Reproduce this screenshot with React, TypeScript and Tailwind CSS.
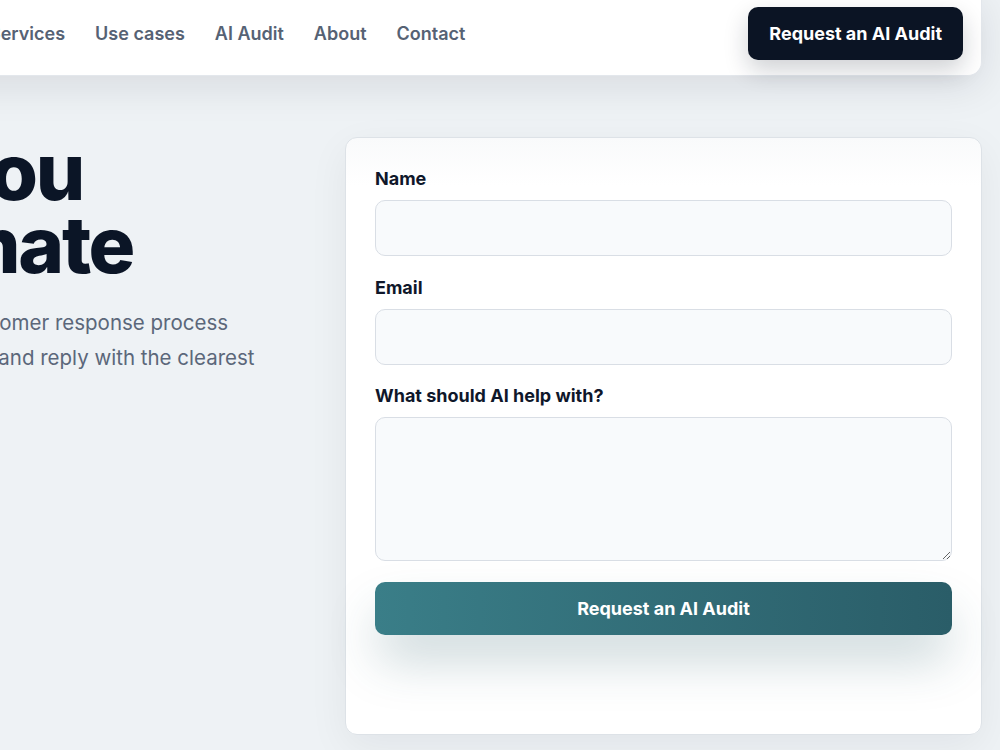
import React from "react";

const font = { fontFamily: "Inter, 'Noto Sans', sans-serif" };

function Field({ label, children }: { label: string; children: React.ReactNode }) {
  return (
    <label className="flex flex-col gap-2">
      <span className="text-[18px] leading-[27px] font-bold text-[#0f172a]">{label}</span>
      {children}
    </label>
  );
}

export default function App() {
  return (
    <div
      style={font}
      className="relative w-[1000px] h-[750px] overflow-hidden bg-[#eef2f5]"
    >
      <div className="ml-[-520px] w-[1502px]">
        {/* Header */}
        <header className="relative z-10 -mt-[8px] h-[84px] flex items-center pl-[20px] pr-[18px] bg-white rounded-br-[14px] border-b border-r border-[#e3e7ec] shadow-[0_10px_40px_rgba(15,23,42,0.10)]">
          <div className="flex items-center gap-3 w-[489px]">
            <div className="w-9 h-9 rounded-[10px] bg-[#0b1424]" />
            <span className="text-[20px] font-extrabold text-[#0b1526]">Northlane AI</span>
          </div>
          <nav className="flex items-center gap-[30px] text-[18px] font-semibold text-[#566274]">
            <a>Services</a>
            <a>Use cases</a>
            <a>AI Audit</a>
            <a>About</a>
            <a>Contact</a>
          </nav>
          <button className="ml-auto h-[53px] px-[21px] rounded-[10px] bg-[#0b1424] text-white text-[18px] font-bold shadow-[0_10px_24px_rgba(15,23,42,0.20)]">
            Request an AI Audit
          </button>
        </header>

        {/* Main */}
        <main className="flex items-start pt-[59px]">
          <section className="flex-1 pl-[20px]">
            <h1 className="whitespace-nowrap text-[78px] leading-[73px] font-extrabold tracking-[-0.03em] text-[#0b1526]">
              Tell us what you
              <br />
              want to automate
            </h1>
            <p className="mt-[24px] whitespace-nowrap text-[20.5px] leading-[35px] text-[#5b677a]">
              In one meeting, we'll look at every step of your customer response process
              <br />
              then show exactly where AI can read, triage, route, and reply with the clearest
              <br />
              answer, every time.
            </p>
          </section>

          <div className="mt-[2px] w-[637px] shrink-0 rounded-[12px] border border-[#dde2e7] bg-gradient-to-b from-[#f9fafb] to-white to-[8%] px-[29px] pt-[27px] pb-[99px] shadow-[0_12px_40px_rgba(15,23,42,0.06)]">
            <form className="flex flex-col">
              <Field label="Name">
                <input className="h-[56px] w-full rounded-[10px] border border-[#d9dee5] bg-[#f8fafc] px-4 outline-none" />
              </Field>
              <div className="h-[18px]" />
              <Field label="Email">
                <input className="h-[56px] w-full rounded-[10px] border border-[#d9dee5] bg-[#f8fafc] px-4 outline-none" />
              </Field>
              <div className="h-[17px]" />
              <Field label="What should AI help with?">
                <textarea className="h-[144px] w-full rounded-[10px] border border-[#d9dee5] bg-[#f8fafc] px-4 py-3 outline-none" />
              </Field>
              <button
                type="button"
                className="mt-[21px] h-[53px] w-full rounded-[10px] bg-gradient-to-r from-[#3a7e88] to-[#2a5d68] text-white text-[18px] font-bold shadow-[0_28px_50px_-4px_rgba(42,93,104,0.26)]"
              >
                Request an AI Audit
              </button>
            </form>
          </div>
        </main>
      </div>
    </div>
  );
}
